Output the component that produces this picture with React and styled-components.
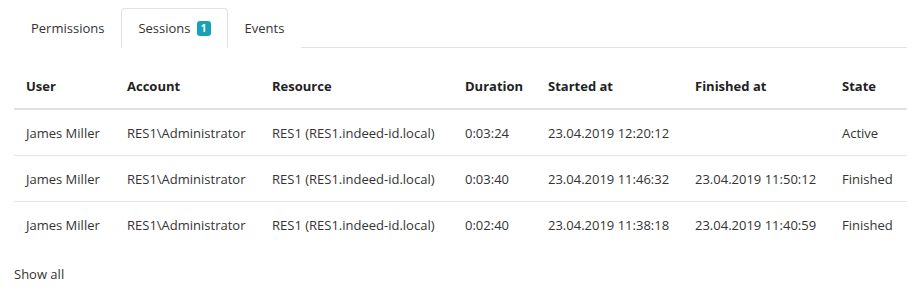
import React from "react";
import styled, { createGlobalStyle } from "styled-components";

const Global = createGlobalStyle`
  html, body { margin: 0; padding: 0; background: #fff; }
  body { font-family: "Open Sans", "Noto Sans", sans-serif; font-size: 13px; color: #333; }
`;

const Page = styled.div`
  padding: 8px 12px 0 14px;
`;

const TabBar = styled.div`
  display: flex;
  border-bottom: 1px solid #dee2e6;
`;

const Tab = styled.div`
  display: flex;
  align-items: center;
  gap: 6px;
  height: 38px;
  padding: 0 16px;
  margin-bottom: -1px;
  border: 1px solid ${p => (p.$active ? "#dee2e6" : "transparent")};
  border-bottom-color: ${p => (p.$active ? "#fff" : "transparent")};
  border-radius: 4px 4px 0 0;
  background: #fff;
  color: #333;
  cursor: pointer;
`;

const Badge = styled.span`
  display: inline-flex;
  align-items: center;
  justify-content: center;
  min-width: 14px;
  height: 15px;
  padding: 0 2px;
  box-sizing: border-box;
  border-radius: 3px;
  background: #17a2b8;
  color: #fff;
  font-size: 10px;
  font-weight: 700;
`;

const Table = styled.table`
  width: 893px;
  margin-top: 15px;
  border-collapse: collapse;
  table-layout: fixed;
`;

const Th = styled.th`
  text-align: left;
  font-weight: 700;
  color: #222;
  height: 45px;
  padding: 0 12px;
  border-bottom: 2px solid #dee2e6;
  white-space: nowrap;
`;

const Tr = styled.tr`
  border-bottom: 1px solid ${p => (p.$last ? "transparent" : "#e6e6e6")};
`;

const Td = styled.td`
  height: 45px;
  padding: 0 12px;
  color: #333;
  white-space: nowrap;
`;

const ShowAll = styled.a`
  display: block;
  margin-top: 16px;
  line-height: 20px;
  color: #333;
  text-decoration: none;
  cursor: pointer;
`;

const cols = [101, 145, 193, 83, 147, 147, 77];
const headers = ["User", "Account", "Resource", "Duration", "Started at", "Finished at", "State"];
const rows = [
  ["James Miller", "RES1\\Administrator", "RES1 (RES1.indeed-id.local)", "0:03:24", "23.04.2019 12:20:12", "", "Active"],
  ["James Miller", "RES1\\Administrator", "RES1 (RES1.indeed-id.local)", "0:03:40", "23.04.2019 11:46:32", "23.04.2019 11:50:12", "Finished"],
  ["James Miller", "RES1\\Administrator", "RES1 (RES1.indeed-id.local)", "0:02:40", "23.04.2019 11:38:18", "23.04.2019 11:40:59", "Finished"],
];

export default function App() {
  return (
    <Page>
      <Global />
      <TabBar>
        <Tab>Permissions</Tab>
        <Tab $active>
          Sessions <Badge>1</Badge>
        </Tab>
        <Tab>Events</Tab>
      </TabBar>
      <Table>
        <colgroup>
          {cols.map((w, i) => (
            <col key={i} style={{ width: w }} />
          ))}
        </colgroup>
        <thead>
          <tr>
            {headers.map(h => (
              <Th key={h}>{h}</Th>
            ))}
          </tr>
        </thead>
        <tbody>
          {rows.map((r, i) => (
            <Tr key={i} $last={i === rows.length - 1}>
              {r.map((c, j) => (
                <Td key={j}>{c}</Td>
              ))}
            </Tr>
          ))}
        </tbody>
      </Table>
      <ShowAll>Show all</ShowAll>
    </Page>
  );
}
